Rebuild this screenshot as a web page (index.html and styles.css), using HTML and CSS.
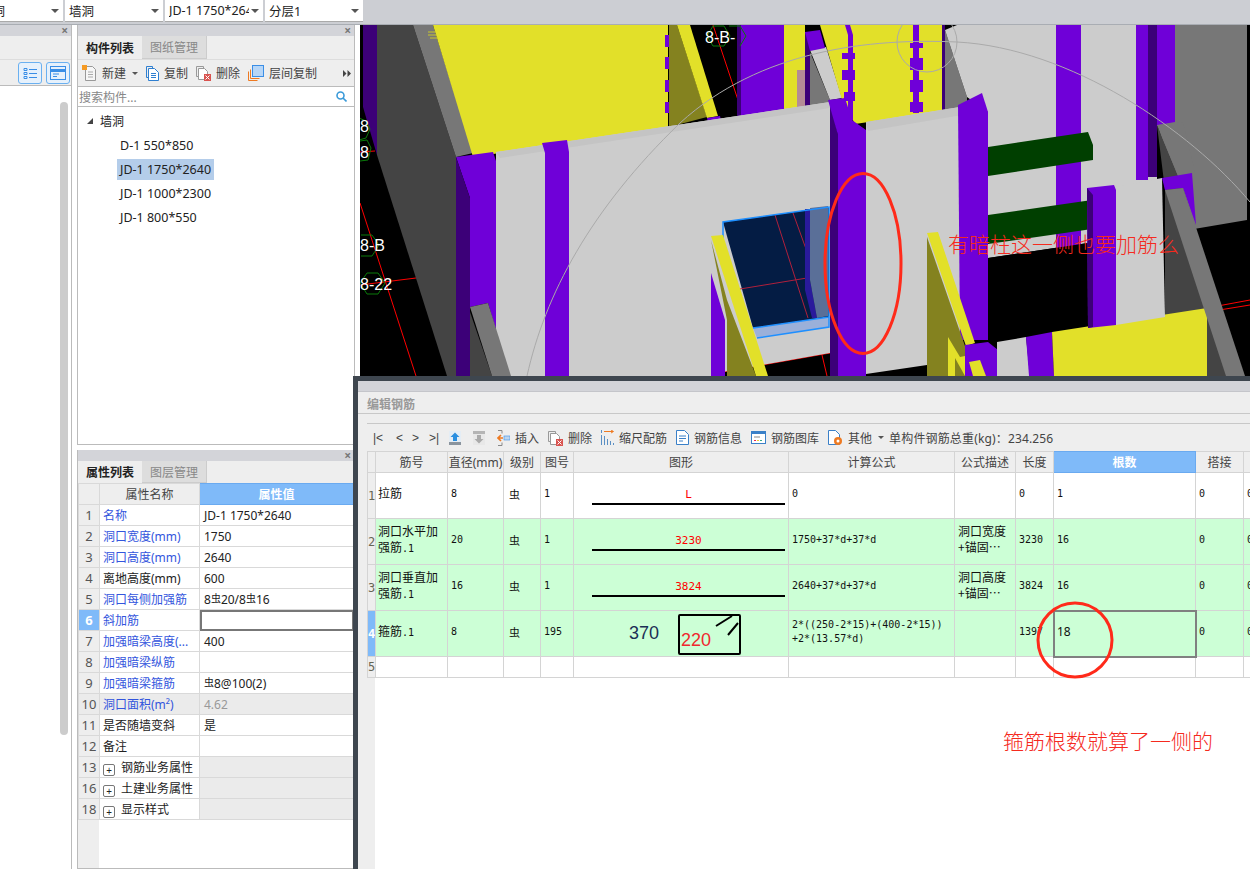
FILE: index.html
```html
<!DOCTYPE html>
<html lang="zh">
<head>
    <meta charset="UTF-8">
    <title>编辑钢筋</title>
    <link rel="stylesheet" href="styles.css">
</head>
<body>
    <!-- 顶部下拉条 -->
    <div class="topbar">
        <div class="combo combo-first"><span class="combo-text clipped">墙洞</span><i class="arrow"></i></div>
        <div class="combo combo-second"><span class="combo-text">墙洞</span><i class="arrow"></i></div>
        <div class="combo combo-third"><span class="combo-text">JD-1 1750*2640</span><i class="arrow"></i></div>
        <div class="combo combo-fourth"><span class="combo-text">分层1</span><i class="arrow"></i></div>
    </div>

    <div class="main">
        <!-- 左侧窄面板 -->
        <div class="side-panel">
            <div class="title-bar"><span class="close">×</span></div>
            <div class="side-tabs"></div>
            <div class="side-tools">
                <span class="view-btn">
                    <svg width="14" height="14" viewBox="0 0 14 14" fill="none" stroke="#3a8ee6"><path d="M1 2.5h3v2H1zM1 6.5h3v2H1zM1 10.5h3v2H1zM6 3.5h8M6 7.5h8M6 11.5h8"/></svg>
                </span>
                <span class="view-btn">
                    <svg width="16" height="14" viewBox="0 0 16 14" fill="none" stroke="#3a8ee6"><rect x=".5" y=".5" width="15" height="13"/><path d="M.5 4.5h15" stroke-width="3"/><path d="M3 8h6M3 10.5h4"/></svg>
                </span>
            </div>
            <div class="side-body"><div class="scroll-thumb"></div></div>
        </div>

        <!-- 中间：构件列表 + 属性列表 -->
        <div class="center-col">
            <div class="panel list-panel">
                <div class="title-bar"><span class="close">×</span></div>
                <div class="tabs">
                    <span class="tab active">构件列表</span>
                    <span class="tab">图纸管理</span>
                </div>
                <div class="list-tools">
                    <span class="tool new-tool">
                        <svg width="15" height="16" viewBox="0 0 15 16" fill="none"><path d="M3.5 1.5h7l3 3v11h-10z" fill="#f6f6f6" stroke="#999"/><path d="M6 7h5M6 9.5h5M6 12h5" stroke="#aaa"/><rect x="0" y="0" width="5" height="5" fill="#f59a23"/></svg>
                        新建<i class="arrow small"></i>
                    </span>
                    <span class="tool">
                        <svg width="13" height="16" viewBox="0 0 13 16" fill="none" stroke="#2f7fd0"><path d="M.5 1.5h6v2M.5 1.5v11h2"/><path d="M2.5 3.5h6l4 4v8h-10z" fill="#fff"/><path d="M5 8.5h5M5 10.5h5M5 12.5h5"/></svg>
                        复制
                    </span>
                    <span class="tool">
                        <svg width="15" height="16" viewBox="0 0 15 16" fill="none"><path d="M.5 1.5h7v2M.5 1.5v10h2" stroke="#999"/><path d="M2.5 3.5h6l3 3v8h-9z" fill="#fff" stroke="#999"/><rect x="8" y="9" width="7" height="7" fill="#d9534f"/><path d="M9.5 10.5l4 4M13.5 10.5l-4 4" stroke="#fff"/></svg>
                        删除
                    </span>
                    <span class="tool">
                        <svg width="16" height="16" viewBox="0 0 16 16" fill="none"><path d="M.5 6.5v9h9" stroke="#ee7a22"/><path d="M2.5 4.5v9h9" stroke="#ee7a22"/><rect x="4.5" y=".5" width="11" height="11" fill="#b7d6f7" stroke="#3a8ee6"/></svg>
                        层间复制
                    </span>
                    <span class="more-arrows">
                        <svg width="8" height="7" viewBox="0 0 8 7" fill="#444"><path d="M0 0l3.5 3.5L0 7zM4.5 0L8 3.5 4.5 7z"/></svg>
                    </span>
                </div>
                <div class="search">
                    <span>搜索构件...</span>
                    <svg width="11" height="11" viewBox="0 0 11 11" fill="none" stroke="#3a9ad9" stroke-width="1.6"><circle cx="4.5" cy="4.5" r="3.5"/><path d="M7 7l3.5 3.5"/></svg>
                </div>
                <div class="tree">
                    <div class="tree-group"><i class="tree-arrow"></i>墙洞</div>
                    <div class="tree-item"><span>D-1 550*850</span></div>
                    <div class="tree-item"><span class="selected">JD-1 1750*2640</span></div>
                    <div class="tree-item"><span>JD-1 1000*2300</span></div>
                    <div class="tree-item"><span>JD-1 800*550</span></div>
                </div>
            </div>

            <div class="panel prop-panel">
                <div class="title-bar"><span class="close">×</span></div>
                <div class="tabs tabs-short">
                    <span class="tab active">属性列表</span>
                    <span class="tab">图层管理</span>
                </div>
                <div class="prop-body">
                    <table class="prop-table">
                        <colgroup><col class="c-num"><col class="c-name"><col class="c-val"></colgroup>
                        <tr><th></th><th>属性名称</th><th class="hl">属性值</th></tr>
                        <tr><td class="num">1</td><td class="blue">名称</td><td>JD-1 1750*2640</td></tr>
                        <tr><td class="num">2</td><td class="blue">洞口宽度(mm)</td><td>1750</td></tr>
                        <tr><td class="num">3</td><td class="blue">洞口高度(mm)</td><td>2640</td></tr>
                        <tr><td class="num">4</td><td>离地高度(mm)</td><td>600</td></tr>
                        <tr><td class="num">5</td><td class="blue">洞口每侧加强筋</td><td>8<span class="grade">虫</span>20/8<span class="grade">虫</span>16</td></tr>
                        <tr><td class="num hl">6</td><td class="blue">斜加筋</td><td class="cur"></td></tr>
                        <tr><td class="num">7</td><td class="blue">加强暗梁高度(...</td><td>400</td></tr>
                        <tr><td class="num">8</td><td class="blue">加强暗梁纵筋</td><td></td></tr>
                        <tr><td class="num">9</td><td class="blue">加强暗梁箍筋</td><td><span class="grade">虫</span>8@100(2)</td></tr>
                        <tr class="off"><td class="num">10</td><td class="blue">洞口面积(m²)</td><td class="gray">4.62</td></tr>
                        <tr><td class="num">11</td><td>是否随墙变斜</td><td>是</td></tr>
                        <tr><td class="num">12</td><td>备注</td><td></td></tr>
                        <tr><td class="num">13</td><td><i class="plus">+</i>钢筋业务属性</td><td class="shade"></td></tr>
                        <tr><td class="num">16</td><td><i class="plus">+</i>土建业务属性</td><td class="shade"></td></tr>
                        <tr><td class="num">18</td><td><i class="plus">+</i>显示样式</td><td class="shade"></td></tr>
                    </table>
                </div>
            </div>
        </div>

        <!-- 右侧：三维视图 + 编辑钢筋窗口 -->
        <div class="right-col">
            <div class="scene">
                <svg class="scene-svg" width="890" height="351" viewBox="360 25 890 351">
                    <rect x="360" y="25" width="890" height="351" fill="#000"/>
                    <!-- 轴线 -->
                    <g stroke="#f00" stroke-width="1" fill="none">
                        <path d="M360 203L416 376M360 285L416 278M360 152L375 151M713 25L738 100"/>
                        <path d="M1207 308L1250 300M1207 312L1250 305M988 338L1087 325M1000 335L988 338"/>
                        <path d="M711 374L830 353M822 355L827 376"/>
                    </g>
                    <path d="M363 25h14v130l-14-48z" fill="#3c0078"/>
                    <path d="M377 25h36l43 132v219h-9L377 155z" fill="#444"/>
                    <path d="M413 25h20l40 128-17 4z" fill="#777"/>
                    <path d="M433 25h235v103l-195 29z" fill="#e2e029"/>
                    <path d="M428 32h8M428 35h9M430 38h8" stroke="#c9c82c"/>
                    <g fill="#6f00d8">
                        <rect x="665" y="35" width="5" height="12"/><rect x="665" y="57" width="5" height="12"/>
                        <rect x="665" y="80" width="5" height="12"/><rect x="665" y="102" width="5" height="11"/>
                    </g>
                    <path d="M669 25h8l30 92-38 10z" fill="#84821f"/>
                    <path d="M677 25h13l28 91-11 2z" fill="#e2e029"/>
                    <path d="M707 118l13-2 2 9-13 2z" fill="#6f00d8"/>
                    <path d="M737 25h47v95h-47z" fill="#6f00d8"/>
                    <path d="M737 25h4v95h-4z" fill="#3c0078"/>
                    <path d="M784 25h21v90h-21z" fill="#e2e029"/>
                    <path d="M797 70h8v40h-8z" fill="#b48c96"/>
                    <path d="M805 32h5v78h-5z" fill="#3c0078"/>
                    <path d="M810 52l20 48v8h-20z" fill="#777"/>
                    <path d="M810 50l16-3 16 51-12 2z" fill="#ccc"/>
                    <path d="M805 32l15-2 5 18-15 3z" fill="#6f00d8"/>
                    <!-- 后面的墙 -->
                    <path d="M820 25h123v86l-88 13-13-24z" fill="#e2e029"/>
                    <g fill="#6f00d8">
                        <path d="M845 25h5l3 10v85h-5v-85z"/>
                        <rect x="842" y="53" width="13" height="6"/><rect x="842" y="70" width="13" height="10"/><rect x="844" y="92" width="11" height="9"/>
                        <rect x="913" y="25" width="6" height="88"/>
                        <rect x="910" y="43" width="13" height="5"/><rect x="910" y="58" width="13" height="12"/>
                        <rect x="910" y="80" width="13" height="12"/><rect x="910" y="102" width="13" height="10"/>
                    </g>
                    <path d="M942 25h3v88h-3z" fill="#3c0078"/>
                    <path d="M945 30l22 67v12l-22 4z" fill="#777"/>
                    <path d="M945 30l12-5h218v100h-18v75l-69 43-100 15V112l-21-15z" fill="#ccc"/>
                    <path d="M1056 25h25v225h-25z" fill="#6f00d8"/>
                    <path d="M1136 25h12v155h-12z" fill="#6f00d8"/>
                    <path d="M1148 25h9v152h-9z" fill="#3c0078"/>
                    <path d="M1157 25h18v98l-18 3z" fill="#6f00d8"/>
                    <path d="M1175 25h72v195l-59 10-30-105 17-3z" fill="#777"/>
                    <path d="M1157 125l26 63 57 188h-75V190z" fill="#444"/>
                    <path d="M1157 125l26-3 12 50-12 16z" fill="#777"/>
                    <path d="M988 147l100-15 5 13v15l-105 16z" fill="#003f00"/>
                    <path d="M988 215l104-15v29l-104 15z" fill="#003f00"/>
                    <path d="M988 258l100-15v90l-100 15z" fill="#000"/>
                    <!-- 中间的墙 -->
                    <path d="M496 152l334-50v251l-119 21v2H496z" fill="#ccc"/>
                    <path d="M496 152l334-50v6l-330 50z" fill="#c4c4c4"/>
                    <path d="M542 143l25-3 2 12v224h-24V153z" fill="#6f00d8"/>
                    <path d="M456 157l37-5 3 9v169l-8-27-18 4V198z" fill="#6f00d8"/>
                    <path d="M456 157l14 41v178h-14z" fill="#3c0078"/>
                    <path d="M470 312v64h22z" fill="#444"/>
                    <path d="M470 307l18-4 23 73h-19z" fill="#777"/>
                    <!-- 洞口 -->
                    <path d="M723 222l106-15v110l-76 11z" fill="#041c44"/>
                    <path d="M775 215l33 103M793 213l17 47M740 289l67-11" stroke="#b0203c" fill="none"/>
                    <path d="M805 209h5v71l7 38h-5l-7-28z" fill="#2a1a9c"/>
                    <path d="M810 208l18-2v110l-11 2-7-38z" fill="#5a6f98"/>
                    <path d="M753 328l76-11v10l-72 11z" fill="#9bb0d9"/>
                    <path d="M723 240v-18l106-15v120l-72 11M753 328l76-11" stroke="#1e8fff" stroke-width="1.5" fill="none"/>
                    <path d="M711 273l14 47v56h-14z" fill="#6f00d8"/>
                    <path d="M711 240l16 60 29 76h-29v-56z" fill="#84821f"/>
                    <path d="M711 236l12-1 45 141h-12z" fill="#e2e029"/>
                    <!-- 前面的墙 -->
                    <path d="M830 100l8 35v241h-8z" fill="#3c0078"/>
                    <path d="M828 100l17-2 7 22 14 10v246h-28V135z" fill="#6f00d8"/>
                    <path d="M866 122l94-15v243l-33 15-61 9z" fill="#ccc"/>
                    <path d="M866 122l94-15 2 8-94 16z" fill="#c4c4c4"/>
                    <path d="M958 105l24-12 6 19v228h-28z" fill="#6f00d8"/>
                    <path d="M927 237l38 109v30h-38z" fill="#84821f"/>
                    <path d="M948 337l12 20 5-1v20h-17z" fill="#e2e029"/>
                    <path d="M955 376v-18l10 18z" fill="#84821f"/>
                    <path d="M927 233l11-1 37 111-9 3z" fill="#e2e029"/>
                    <path d="M965 345l23-3 10 8v26h-33z" fill="#6f00d8"/>
                    <path d="M969 362l11-2 6 16h-13z" fill="#e2e029"/>
                    <path d="M997 342l29-5 4 39h-33z" fill="#ccc"/>
                    <path d="M1026 337l26-5 2 44h-25z" fill="#6f00d8"/>
                    <path d="M1052 332l155-24v68h-153z" fill="#e2e029"/>
                    <!-- 右前墙 -->
                    <path d="M1087 188l27-3 2 5v135l-28 3z" fill="#6f00d8"/>
                    <path d="M1087 188l6 7v132l-5 1z" fill="#3c0078"/>
                    <path d="M1116 187l46-9 3 139-49 8z" fill="#ccc"/>
                    <path d="M1162 178l30-5 4 52-13-37-18 2z" fill="#6f00d8"/>
                    <path d="M1165 190l18-2 62 188h-19z" fill="#777"/>
                    <!-- 轴号 -->
                    <g fill="none" stroke="#0a7a0a">
                        <path d="M359 118l7 3 4 8-4 9-7 2"/>
                        <path d="M360 141l7-1 4 8-3 12-8 1"/>
                        <path d="M361 235h11l7 10-7 11h-11"/>
                        <path d="M367 273h11l7 10-7 11h-11l-7-11z"/>
                        <path d="M713 26h11l6 10-6 10h-11l-6-10zM729 26h11l6 10-6 10"/>
                    </g>
                    <g class="axis-text" fill="#fff">
                        <text x="360" y="132">8</text>
                        <text x="360" y="158">8</text>
                        <text x="360" y="251">8-B</text>
                        <text x="360" y="290">8-22</text>
                        <text x="705" y="43">8-B-</text>
                    </g>
                    <!-- 辅助圆弧 -->
                    <path d="M527 376C545 295 590 210 680 123 760 50 870 38 957 42 1070 48 1190 130 1250 202" fill="none" stroke="#aaa"/>
                    <circle cx="927" cy="42" r="30" fill="none" stroke="#aaa"/>
                    <!-- 批注 -->
                    <ellipse cx="863" cy="263.5" rx="38" ry="90" fill="none" stroke="#ff2a1a" stroke-width="3"/>
                </svg>
                <div class="note note-top">有暗柱这一侧也要加筋么</div>
            </div>

            <div class="dialog">
                <div class="dialog-bar"></div>
                <div class="dialog-title">编辑钢筋</div>
                <div class="rebar-panel">
                    <div class="rebar-tools">
                        <span class="nav nav-first">|&lt;</span><span class="nav nav-second">&lt;</span><span class="nav">&gt;</span><span class="nav">&gt;|</span>
                        <span class="square-btn">
                            <svg width="12" height="14" viewBox="0 0 12 14"><rect width="12" height="14" fill="#8a949e"/><rect y="0" width="12" height="11" fill="#e4edf5"/><path d="M6 1.5L10.5 6H8v4H4V6H1.5z" fill="#2a8fe0"/></svg>
                        </span>
                        <span class="square-btn">
                            <svg width="12" height="14" viewBox="0 0 12 14"><rect width="12" height="14" fill="#b5b5b5"/><rect y="3" width="12" height="11" fill="#e8e8e8"/><path d="M6 12.5L10.5 8H8V4H4v4H1.5z" fill="#aaa"/></svg>
                        </span>
                        <span class="tool">
                            <svg width="13" height="16" viewBox="0 0 13 16" fill="none"><path d="M1 .5h4v3M1 15.5h4v-3" stroke="#888"/><path d="M6 8H2M4 5L1 8l3 3" stroke="#ee7a22" stroke-width="1.6"/><rect x="7" y="6" width="6" height="4" fill="#bcd6f0" stroke="#3a8ee6" stroke-width=".6"/></svg>
                            插入
                        </span>
                        <span class="tool">
                            <svg width="15" height="16" viewBox="0 0 15 16" fill="none"><path d="M.5 1.5h7v2M.5 1.5v10h2" stroke="#999"/><path d="M2.5 3.5h6l3 3v8h-9z" fill="#fff" stroke="#999"/><rect x="8" y="9" width="7" height="7" fill="#d9534f"/><path d="M9.5 10.5l4 4M13.5 10.5l-4 4" stroke="#fff"/></svg>
                            删除
                        </span>
                        <span class="tool">
                            <svg width="13" height="15" viewBox="0 0 13 15" fill="none"><path d="M3 1.5h9M10 0l2.5 1.5L10 3" stroke="#ee7a22"/><path d="M.5 0v3M.5 5v10M3.5 6v9M6.5 9v6M9.5 11v4M12.5 13v2" stroke="#5a8fc4"/></svg>
                            缩尺配筋
                        </span>
                        <span class="tool">
                            <svg width="13" height="15" viewBox="0 0 13 15" fill="#fff" stroke="#3a80c8"><path d="M.5.5h8l4 4v10H.5z"/><path d="M3 6h7M3 8.500h7M3 11h4" fill="none"/></svg>
                            钢筋信息
                        </span>
                        <span class="tool">
                            <svg width="15" height="13" viewBox="0 0 15 13"><rect x=".5" y=".5" width="14" height="12" fill="#fff" stroke="#3a80c8"/><rect width="15" height="3" fill="#3a80c8"/><path d="M3 6h6" stroke="#888"/><path d="M3 9.500h2" stroke="#e25"/><path d="M6 9.500h2" stroke="#ec3"/><path d="M9 9.500h2" stroke="#3a8"/></svg>
                            钢筋图库
                        </span>
                        <span class="tool">
                            <svg width="15" height="16" viewBox="0 0 15 16"><path d="M.5.5h7l4 4v10H.500z" fill="#fff" stroke="#3a80c8"/><circle cx="10" cy="11" r="4" fill="#ee7a22"/><circle cx="10" cy="11" r="1.500" fill="#fff"/></svg>
                            其他<i class="arrow small"></i>
                        </span>
                        <span class="total">单构件钢筋总重(kg)：234.256</span>
                    </div>
                    <div class="rebar-table-wrap">
                        <table class="rebar-table">
                            <colgroup>
                                <col class="w-8"><col class="w-72"><col class="w-56"><col class="w-37"><col class="w-33"><col class="w-215">
                                <col class="w-166"><col class="w-61"><col class="w-38"><col class="w-142"><col class="w-48"><col class="w-60">
                            </colgroup>
                            <tr>
                                <th></th><th>筋号</th><th>直径(mm)</th><th>级别</th><th>图号</th><th>图形</th>
                                <th>计算公式</th><th>公式描述</th><th>长度</th><th class="hl">根数</th><th>搭接</th><th></th>
                            </tr>
                            <tr class="row-tall">
                                <td class="idx">1</td><td class="name"><span class="zh">拉筋</span></td><td>8</td><td class="grade-cell">虫</td><td>1</td>
                                <td class="fig"><div class="bar-shape">L</div></td>
                                <td>0</td><td></td><td>0</td><td>1</td><td>0</td><td>0</td>
                            </tr>
                            <tr class="row-tall green">
                                <td class="idx">2</td><td class="name"><span class="zh">洞口水平加<br>强筋</span>.1</td><td>20</td><td class="grade-cell">虫</td><td>1</td>
                                <td class="fig"><div class="bar-shape">3230</div></td>
                                <td>1750+37*d+37*d</td><td><span class="zh">洞口宽度<br>+锚固⋯</span></td><td>3230</td><td>16</td><td>0</td><td>0</td>
                            </tr>
                            <tr class="row-tall green">
                                <td class="idx">3</td><td class="name"><span class="zh">洞口垂直加<br>强筋</span>.1</td><td>16</td><td class="grade-cell">虫</td><td>1</td>
                                <td class="fig"><div class="bar-shape">3824</div></td>
                                <td>2640+37*d+37*d</td><td><span class="zh">洞口高度<br>+锚固⋯</span></td><td>3824</td><td>16</td><td>0</td><td>0</td>
                            </tr>
                            <tr class="row-tall green">
                                <td class="idx hl">4</td><td class="name"><span class="zh">箍筋</span>.1</td><td>8</td><td class="grade-cell">虫</td><td>195</td>
                                <td class="fig">
                                    <svg class="stirrup" width="215" height="44" viewBox="0 0 215 44">
                                        <text x="55" y="28" class="dim-blue">370</text>
                                        <rect x="105" y="4" width="61" height="39" rx="1" fill="none" stroke="#000" stroke-width="2"/>
                                        <path d="M142 15l16-10M154 24l10-12" stroke="#000" stroke-width="2"/>
                                        <text x="107" y="35" class="dim-red">220</text>
                                    </svg>
                                </td>
                                <td>2*((250-2*15)+(400-2*15))<br>+2*(13.57*d)</td><td></td><td>1397</td><td class="cur">18</td><td>0</td><td>0</td>
                            </tr>
                            <tr class="row-short">
                                <td class="idx">5</td><td></td><td></td><td></td><td></td><td></td><td></td><td></td><td></td><td></td><td></td><td></td>
                            </tr>
                        </table>
                    </div>
                </div>
                <svg class="ring" width="80" height="80" viewBox="0 0 80 80"><circle cx="40" cy="40" r="37" fill="none" stroke="#ff2a1a" stroke-width="3"/></svg>
                <div class="note note-bottom">箍筋根数就算了一侧的</div>
            </div>
        </div>
    </div>
</body>
</html>
```

FILE: styles.css
```css
* {
    box-sizing: border-box;
    margin: 0;
    padding: 0;
}

html, body {
    width: 1250px;
    height: 869px;
    overflow: hidden;
}

body {
    font-family: "Noto Sans", "Noto Sans CJK SC", sans-serif;
    font-size: 12px;
    color: #222;
    background-color: #fff;
}

/* 顶部下拉条 */
.topbar {
    display: flex;
    height: 25px;
    background-color: #ccced3;
    border-bottom: 1px solid #a9adb3;
}

.combo {
    display: flex;
    align-items: center;
    justify-content: space-between;
    height: 22px;
    padding: 0 4px;
    background-color: #fff;
    border-bottom: 1px solid #aaa;
    overflow: hidden;
}

.combo-first { width: 63px; margin-right: 2px; padding: 0 4px 0 0; }
.combo-second { width: 98px; margin-right: 2px; }
.combo-third { width: 98px; margin-right: 2px; }
.combo-fourth { width: 98px; }

.combo-text {
    flex: 1;
    white-space: nowrap;
    overflow: hidden;
    font-size: 12.5px;
}

.clipped {
    direction: rtl;
    flex: none;
    width: 5px;
}

.arrow {
    flex: none;
    width: 0;
    height: 0;
    border-left: 4px solid transparent;
    border-right: 4px solid transparent;
    border-top: 4px solid #555;
    margin-left: 2px;
}

.arrow.small {
    border-left-width: 3px;
    border-right-width: 3px;
    border-top-width: 3px;
    margin-left: 1px;
}

.main {
    display: flex;
    height: 844px;
}

.title-bar {
    display: flex;
    justify-content: flex-end;
    align-items: center;
    height: 11px;
    background-color: #d3d4d9;
    padding-right: 3px;
}

.close {
    color: #777;
    font-size: 12px;
    line-height: 11px;
    font-weight: bold;
}

/* 左侧面板 */
.side-panel {
    display: flex;
    flex-direction: column;
    width: 72px;
    border-right: 1px solid #bbb;
}

.side-tabs {
    height: 23px;
    background-color: #eee;
}

.side-tools {
    display: flex;
    justify-content: flex-end;
    align-items: center;
    gap: 4px;
    height: 27px;
    padding-right: 1px;
    background-color: #eee;
    border-top: 1px solid #ddd;
    border-bottom: 1px solid #bbb;
}

.view-btn {
    display: flex;
    align-items: center;
    justify-content: center;
    width: 24px;
    height: 22px;
    background-color: #e6f1fc;
    border: 1px solid #6ab0f0;
    border-radius: 3px;
}

.side-body {
    flex: 1;
    padding: 16px 3px 0 0;
    display: flex;
    justify-content: flex-end;
}

.scroll-thumb {
    width: 8px;
    height: 633px;
    border-radius: 4px;
    background-color: #ccc;
}

/* 中间栏 */
.center-col {
    display: flex;
    flex-direction: column;
    gap: 5px;
    width: 278px;
    margin-left: 5px;
    background-color: #fff;
}

.panel {
    display: flex;
    flex-direction: column;
    border-left: 1px solid #bbb;
    border-right: 1px solid #bbb;
    border-bottom: 1px solid #bbb;
}

.list-panel {
    height: 420px;
}

.prop-panel {
    flex: 1;
}

.tabs {
    display: flex;
    height: 23px;
    background-color: #eee;
    flex: none;
}

.tabs-short {
    height: 22px;
}

.tab {
    display: flex;
    align-items: center;
    justify-content: center;
    width: 65px;
    color: #888;
    background-color: #ddd;
    border-right: 1px solid #ccc;
    border-bottom: 1px solid #ccc;
}

.tab.active {
    width: 64px;
    color: #222;
    font-weight: bold;
    background-color: #eee;
    border: none;
}

.list-tools {
    display: flex;
    align-items: center;
    height: 28px;
    padding-left: 4px;
    background-color: #eee;
    border-top: 1px solid #ddd;
    border-bottom: 1px solid #bbb;
    flex: none;
}

.tool {
    display: inline-flex;
    align-items: center;
    gap: 5px;
    margin-right: 8px;
    color: #444;
    white-space: nowrap;
}

.more-arrows {
    display: flex;
    margin-left: auto;
    margin-right: 3px;
}

.search {
    display: flex;
    align-items: center;
    justify-content: space-between;
    height: 20px;
    padding: 0 7px 0 1px;
    color: #888;
    border-bottom: 1px solid #bbb;
    flex: none;
}

.tree {
    flex: 1;
    padding: 2px 0 0 0;
}

.tree-group {
    display: flex;
    align-items: center;
    height: 24px;
    padding-left: 9px;
}

.tree-arrow {
    width: 0;
    height: 0;
    margin-right: 7px;
    border-left: 6px solid transparent;
    border-bottom: 6px solid #444;
}

.tree-item {
    display: flex;
    align-items: center;
    height: 24px;
    padding-left: 39px;
}

.tree-item span {
    padding: 2px 3px;
    line-height: 17px;
    white-space: nowrap;
    font-size: 12.5px;
}

.tree-item .selected {
    background-color: #b4cdea;
}

/* 属性表 */
.prop-body {
    flex: 1;
    background: linear-gradient(to right, #eee 21px, #fff 21px);
}

.prop-table {
    width: 275px;
    table-layout: fixed;
    border-collapse: collapse;
}

.c-num { width: 21px; }
.c-name { width: 100px; }
.c-val { width: 154px; }

.prop-table th,
.prop-table td {
    height: 21px;
    padding: 0 4px;
    border: 1px solid #d9d9d9;
    font-weight: normal;
    text-align: left;
    white-space: nowrap;
    overflow: hidden;
}

.prop-table td:nth-child(2) {
    padding-left: 3px;
}

.prop-table th {
    text-align: center;
    color: #444;
    background-color: #eee;
    padding: 0;
}

.prop-table th.hl {
    color: #fff;
    background-color: #7fbaf9;
    border-color: #6aaaf0;
    font-weight: bold;
}

.prop-table td.num {
    padding: 0;
    text-align: center;
    color: #555;
    background-color: #eee;
    font-size: 13px;
}

.prop-table td.num.hl {
    color: #fff;
    background-color: #7fbaf9;
    font-weight: bold;
}

.prop-table .blue {
    color: #3355dd;
}

.prop-table .cur {
    outline: 2px solid #777;
    outline-offset: -2px;
}

.prop-table .off td {
    background-color: #ebebeb;
}

.prop-table .gray {
    color: #999;
}

.prop-table .shade {
    background-color: #ebebeb;
}

.grade {
    font-size: 10px;
    vertical-align: 2px;
}

.plus {
    display: inline-flex;
    align-items: center;
    justify-content: center;
    width: 12px;
    height: 12px;
    margin: 0 6px 0 0;
    border: 1px solid #777;
    border-radius: 2px;
    font-style: normal;
    font-size: 10px;
    line-height: 10px;
    vertical-align: -2px;
}

/* 右侧 */
.right-col {
    display: flex;
    flex-direction: column;
    flex: 1;
    min-width: 0;
    margin-left: 5px;
}

.scene {
    position: relative;
    height: 351px;
    flex: none;
}

.scene-svg {
    display: block;
}

.axis-text text {
    font-family: "Liberation Sans", sans-serif;
    font-size: 16px;
}

.note {
    position: absolute;
    color: #f52a1e;
    font-family: "Noto Sans CJK SC", sans-serif;
    font-size: 21px;
    font-weight: 300;
    line-height: 24px;
    white-space: nowrap;
}

.note-top {
    left: 588px;
    top: 206px;
}

.note-bottom {
    left: 645px;
    top: 347px;
}

.ring {
    position: absolute;
    left: 677px;
    top: 219px;
}

/* 编辑钢筋窗口 */
.dialog {
    position: relative;
    z-index: 2;
    flex: 1;
    margin-left: -7px;
    background-color: #eee;
    border-top: 5px solid #3e464f;
    border-left: 5px solid #3e464f;
    overflow: hidden;
}

.dialog-bar {
    height: 11px;
    background-color: #d3d4d9;
    border-bottom: 1px solid #c4c5ca;
}

.dialog-title {
    height: 22px;
    padding: 3px 0 0 9px;
    color: #999;
    border-bottom: 1px solid #c8c8c8;
    font-weight: bold;
}

.rebar-panel {
    margin: 9px 0 0 9px;
    height: 456px;
    background: linear-gradient(to right, #eee 8px, #fff 8px);
    border-top: 1px solid #c8c8c8;
}

.rebar-tools {
    display: flex;
    align-items: center;
    height: 27px;
    padding-left: 6px;
    background-color: #eee;
}

.rebar-tools .tool {
    color: #444;
    margin-right: 9px;
}

.nav {
    width: 17px;
    color: #444;
    font-size: 12px;
    font-family: "Liberation Sans", sans-serif;
}

.nav-first {
    width: 23px;
}

.nav-second {
    width: 16px;
}

.square-btn {
    display: flex;
    margin: 0 12px 0 0;
}

.nav + .square-btn {
    margin-left: 3px;
}

.total {
    margin-left: -4px;
    color: #444;
    letter-spacing: .15px;
    white-space: nowrap;
}

.rebar-table-wrap {
    overflow: hidden;
}

.rebar-table {
    width: 936px;
    table-layout: fixed;
    border-collapse: collapse;
    font-family: "DejaVu Sans Mono", "Noto Sans CJK SC", monospace;
    font-size: 10px;
}

.w-8 { width: 8px; }
.w-72 { width: 72px; }
.w-56 { width: 56px; }
.w-37 { width: 37px; }
.w-33 { width: 33px; }
.w-215 { width: 215px; }
.w-166 { width: 166px; }
.w-61 { width: 61px; }
.w-38 { width: 38px; }
.w-142 { width: 142px; }
.w-48 { width: 48px; }
.w-60 { width: 60px; }

.rebar-table th,
.rebar-table td {
    border: 1px solid #d4d4d4;
    padding: 0 3px;
    overflow: hidden;
}

.rebar-table th {
    height: 21px;
    padding: 0;
    font-family: "Noto Sans", "Noto Sans CJK SC", sans-serif;
    font-size: 12px;
    font-weight: normal;
    color: #444;
    background-color: #eee;
    white-space: nowrap;
}

.rebar-table th.hl {
    color: #fff;
    font-weight: bold;
    background-color: #7fbaf9;
    border-color: #6aaaf0;
}

.rebar-table td {
    color: #111;
    background-color: #fff;
    line-height: 14px;
}

.row-tall td {
    height: 46px;
    padding-bottom: 3px;
}

.row-short td {
    height: 21px;
}

.rebar-table .green td {
    background-color: #ccffd6;
}

.rebar-table td.name {
    padding-left: 2px;
}

.rebar-table td.idx {
    padding: 0;
    text-align: center;
    font-size: 12px;
    color: #665;
    background-color: #eee;
}

.rebar-table td.idx.hl {
    color: #fff;
    font-weight: bold;
    background-color: #7fbaf9;
}

.zh {
    font-family: "Noto Sans CJK SC", sans-serif;
    font-size: 12px;
    line-height: 14px;
}

.rebar-table td.grade-cell {
    padding-left: 5px;
    font-family: "Noto Sans CJK SC", sans-serif;
    font-size: 11px;
}

.rebar-table td.fig {
    padding: 0;
    vertical-align: top;
}

.bar-shape {
    width: 193px;
    height: 17px;
    margin: 15px 0 0 18px;
    text-align: center;
    font-size: 11px;
    color: #f00;
    line-height: 14px;
    border-bottom: 2px solid #000;
}

.stirrup {
    display: block;
}

.dim-blue {
    font-family: "Liberation Sans", sans-serif;
    font-size: 18px;
    fill: #1c2f55;
}

.dim-red {
    font-family: "Liberation Sans", sans-serif;
    font-size: 18px;
    fill: #f0282e;
}

.rebar-table td.cur {
    outline: 2px solid #808080;
    outline-offset: -1px;
    font-family: "Noto Sans", sans-serif;
    font-size: 12px;
}
```
